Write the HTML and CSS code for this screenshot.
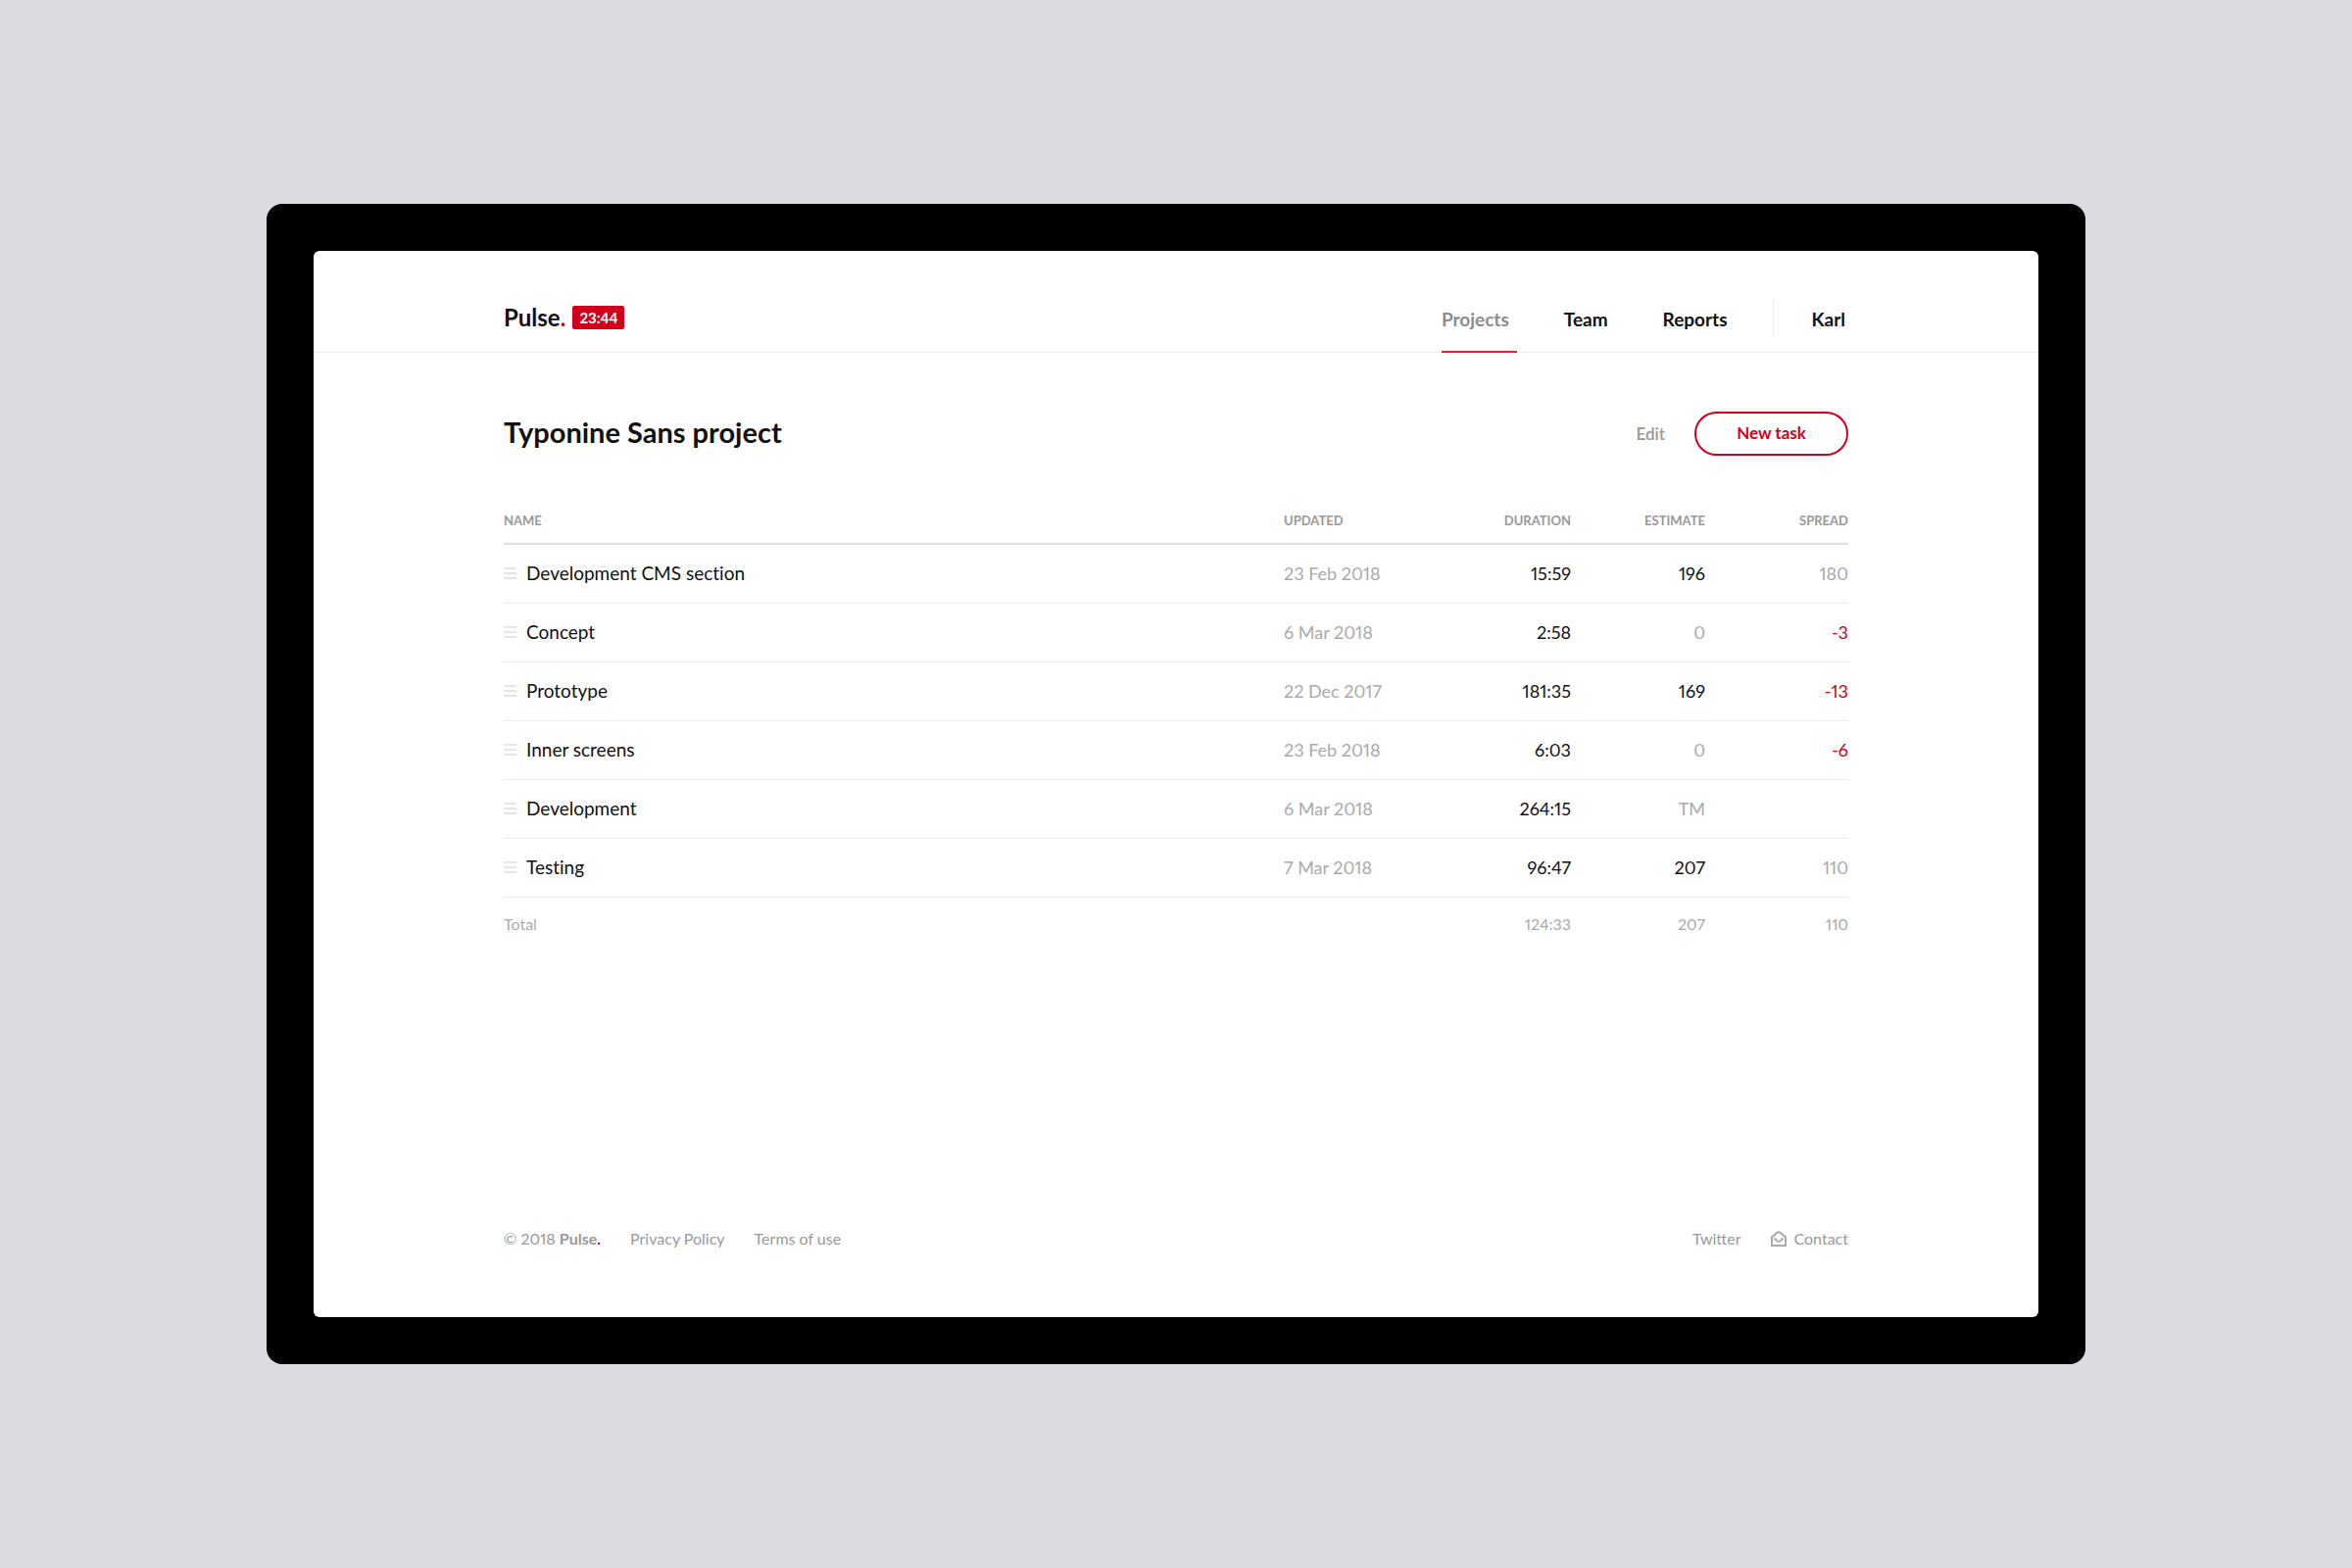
FILE: index.html
```html
<!DOCTYPE html>
<html lang="en">
<head>
    <meta charset="UTF-8" />
    <meta name="viewport" content="width=device-width, initial-scale=1" />
    <title>Typonine Sans project - Pulse</title>
    <link rel="stylesheet" href="styles.css">
</head>
<body>
<div class="device">
  <div class="screen">

    <header class="header">
        <div class="brand">
            <a href="#" class="logo">Pulse<span class="dot">.</span></a>
            <span class="timer">23:44</span>
        </div>
        <nav class="nav">
            <a href="#" class="active">Projects</a>
            <a href="#">Team</a>
            <a href="#">Reports</a>
            <a href="#" class="user">Karl</a>
        </nav>
    </header>

    <main class="main">
        <div class="title-row">
            <h1>Typonine Sans project</h1>
            <div class="actions">
                <a href="#" class="edit">Edit</a>
                <button type="button" class="new-task">New task</button>
            </div>
        </div>

        <table class="tasks">
            <colgroup>
                <col>
                <col class="col-updated">
                <col class="col-num">
                <col class="col-num">
                <col class="col-spread">
            </colgroup>
            <thead>
                <tr>
                    <th>Name</th>
                    <th>Updated</th>
                    <th class="num">Duration</th>
                    <th class="num">Estimate</th>
                    <th class="num">Spread</th>
                </tr>
            </thead>
            <tbody>
                <tr>
                    <td><span class="task"><svg class="handle" viewBox="0 0 13 12"><path d="M0 1h13M0 6h13M0 11h13"/></svg>Development CMS section</span></td>
                    <td class="muted">23 Feb 2018</td>
                    <td class="num">15:59</td>
                    <td class="num">196</td>
                    <td class="num muted">180</td>
                </tr>
                <tr>
                    <td><span class="task"><svg class="handle" viewBox="0 0 13 12"><path d="M0 1h13M0 6h13M0 11h13"/></svg>Concept</span></td>
                    <td class="muted">6 Mar 2018</td>
                    <td class="num">2:58</td>
                    <td class="num muted">0</td>
                    <td class="num negative">-3</td>
                </tr>
                <tr>
                    <td><span class="task"><svg class="handle" viewBox="0 0 13 12"><path d="M0 1h13M0 6h13M0 11h13"/></svg>Prototype</span></td>
                    <td class="muted">22 Dec 2017</td>
                    <td class="num">181:35</td>
                    <td class="num">169</td>
                    <td class="num negative">-13</td>
                </tr>
                <tr>
                    <td><span class="task"><svg class="handle" viewBox="0 0 13 12"><path d="M0 1h13M0 6h13M0 11h13"/></svg>Inner screens</span></td>
                    <td class="muted">23 Feb 2018</td>
                    <td class="num">6:03</td>
                    <td class="num muted">0</td>
                    <td class="num negative">-6</td>
                </tr>
                <tr>
                    <td><span class="task"><svg class="handle" viewBox="0 0 13 12"><path d="M0 1h13M0 6h13M0 11h13"/></svg>Development</span></td>
                    <td class="muted">6 Mar 2018</td>
                    <td class="num">264:15</td>
                    <td class="num muted">TM</td>
                    <td class="num"></td>
                </tr>
                <tr>
                    <td><span class="task"><svg class="handle" viewBox="0 0 13 12"><path d="M0 1h13M0 6h13M0 11h13"/></svg>Testing</span></td>
                    <td class="muted">7 Mar 2018</td>
                    <td class="num">96:47</td>
                    <td class="num">207</td>
                    <td class="num muted">110</td>
                </tr>
            </tbody>
            <tfoot>
                <tr>
                    <td>Total</td>
                    <td></td>
                    <td class="num">124:33</td>
                    <td class="num">207</td>
                    <td class="num">110</td>
                </tr>
            </tfoot>
        </table>
    </main>

    <footer class="footer">
        <div class="links">
            <span>© 2018 <b>Pulse<span class="dot">.</span></b></span>
            <a href="#">Privacy Policy</a>
            <a href="#">Terms of use</a>
        </div>
        <div class="links">
            <a href="#">Twitter</a>
            <a href="#" class="contact">
                <svg class="mail" viewBox="0 0 16 16"><path d="M1 15V6.2L6.8 1.6Q8 .8 9.2 1.6L15 6.2V15ZM3.4 7.6l3 2.7q1.6 1.2 3.2 0L12.6 7.6"/></svg>
                Contact
            </a>
        </div>
    </footer>

  </div>
</div>
</body>
</html>
```
FILE: styles.css
```css
* {
  box-sizing: border-box;
}
body {
  margin: 0;
  min-height: 100vh;
  padding: 208px 272px;
  display: flex;
  background: #dbdce1;
  color: #111;
  font-family: Lato, 'Open Sans', sans-serif;
  font-size: 18px;
  line-height: 24px;
  font-variant-numeric: proportional-nums;
}
a {
  color: inherit;
  text-decoration: none;
}
.dot {
  color: #d0021b;
}

/* monitor */
.device {
  flex: 1;
  display: flex;
  padding: 48px;
  background: #000;
  border-radius: 16px;
}
.screen {
  flex: 1;
  display: flex;
  flex-direction: column;
  background: #fff;
  border-radius: 6px;
}

/* header */
.header {
  display: flex;
  justify-content: space-between;
  padding: 48px 194px 0;
  border-bottom: 1px solid #eee;
}
.brand {
  display: flex;
  align-items: flex-start;
  gap: 7px;
  padding-top: 8px;
}
.logo {
  font-size: 24px;
  font-weight: 700;
}
.timer {
  padding: 0 7px;
  background: #d0021b;
  border-radius: 2px;
  color: #fff;
  font-size: 15px;
  font-weight: 700;
}
.nav {
  display: flex;
  gap: 48px;
  font-size: 19px;
  font-weight: 700;
}
.nav a {
  height: 56px;
  margin-bottom: -1px;
  padding: 10px 8px 0 0;
}
.nav .active {
  color: #8c8c8c;
  border-bottom: 2px solid #dc2439;
}
.nav .user {
  height: 40px;
  margin-left: -10px;
  padding: 10px 3px 0 39px;
  border-left: 1px solid #eee;
}

/* project */
.main {
  flex: 1;
  padding: 60px 194px 0;
}
.title-row {
  display: flex;
  justify-content: space-between;
  align-items: flex-start;
}
h1 {
  margin: 0;
  font-size: 29px;
  line-height: 42px;
  font-weight: 700;
}
.actions {
  display: flex;
  align-items: center;
  gap: 30px;
  font-size: 17px;
}
.edit {
  color: #999;
  font-weight: 600;
}
.new-task {
  width: 157px;
  height: 45px;
  padding: 0 0 2px;
  background: none;
  border: 2px solid #d0021b;
  border-radius: 23px;
  color: #d0021b;
  font: inherit;
  font-weight: 700;
}

/* tasks */
.tasks {
  width: 100%;
  margin-top: 42px;
  border-collapse: collapse;
  table-layout: fixed;
}
.col-updated {
  width: 156px;
}
.col-num {
  width: 137px;
}
.col-spread {
  width: 146px;
}
th, td {
  padding: 0;
  text-align: left;
  border-bottom: 1px solid #eee;
}
th {
  height: 48px;
  border-bottom: 2px solid #ddd;
  color: #999;
  font-size: 13px;
  font-weight: 700;
  text-transform: uppercase;
}
td {
  height: 60px;
}
.num {
  text-align: right;
}
.muted {
  color: #aaa;
}
.negative {
  color: #d0021b;
}
.task {
  display: flex;
  align-items: center;
  gap: 10px;
  font-size: 19px;
  font-variant-ligatures: none;
}
.handle {
  width: 13px;
  height: 12px;
  fill: none;
  stroke: #ccc;
}
tfoot td {
  height: 56px;
  border: none;
  color: #aaa;
  font-size: 16px;
}

/* footer */
.footer {
  display: flex;
  justify-content: space-between;
  padding: 0 194px 68px;
  color: #999;
  font-size: 16px;
}
.links {
  display: flex;
  gap: 30px;
}
.contact {
  display: flex;
  align-items: center;
  gap: 8px;
}
.mail {
  width: 16px;
  height: 16px;
  fill: none;
  stroke: #aaa;
  stroke-width: 2;
}
```
